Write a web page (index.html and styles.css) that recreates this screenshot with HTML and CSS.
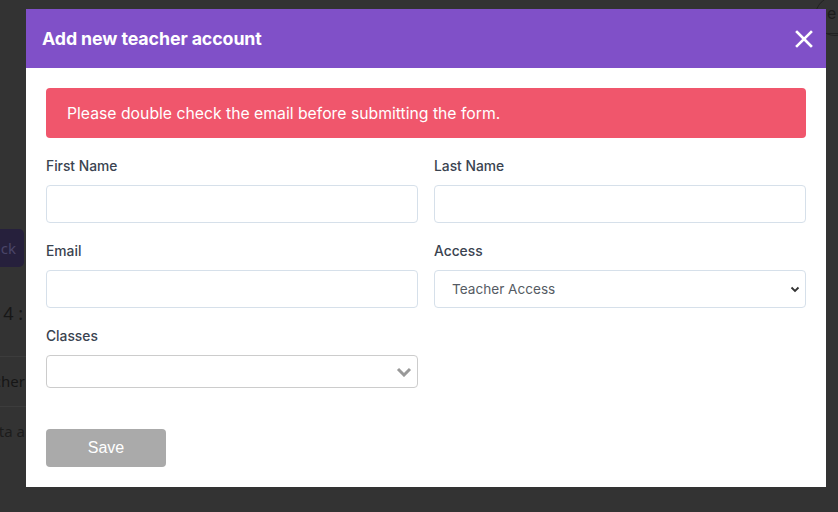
FILE: index.html
```html
<!DOCTYPE html>
<html lang="en">
<head>
<meta charset="utf-8">
<title>Add new teacher account</title>
<link rel="stylesheet" href="styles.css">
</head>
<body>
<div class="page">
  <div class="page-top"><span class="avatar">e</span></div>
  <div class="page-content">
    <button class="back-btn">Back</button>
    <div class="page-heading">Term 4 :</div>
    <div class="page-row">Teacher</div>
    <div class="page-row">No data a</div>
  </div>
</div>

<div class="overlay">
  <div class="modal">
    <div class="modal-header">
      <h2 class="modal-title">Add new teacher account</h2>
      <button class="close-btn" aria-label="Close">
        <svg width="18" height="18" viewBox="0 0 18 18"><path d="M2 2 L16 16 M16 2 L2 16" stroke="#fff" stroke-width="2.6" stroke-linecap="square"/></svg>
      </button>
    </div>
    <div class="modal-body">
      <div class="alert">Please double check the email before submitting the form.</div>
      <div class="form-grid">
        <div class="field">
          <label class="label">First Name</label>
          <div class="input"></div>
        </div>
        <div class="field">
          <label class="label">Last Name</label>
          <div class="input"></div>
        </div>
        <div class="field">
          <label class="label">Email</label>
          <div class="input"></div>
        </div>
        <div class="field">
          <label class="label">Access</label>
          <div class="input select">
            <span class="select-text">Teacher Access</span>
            <svg class="chev-small" width="10" height="7" viewBox="0 0 10 7"><path d="M1.5 1.5 L5 5 L8.5 1.5" fill="none" stroke="#333" stroke-width="1.8"/></svg>
          </div>
        </div>
        <div class="field">
          <label class="label">Classes</label>
          <div class="input multi">
            <svg class="chev-big" width="16" height="10" viewBox="0 0 16 10"><path d="M2 2 L8 8 L14 2" fill="none" stroke="#999" stroke-width="3"/></svg>
          </div>
        </div>
      </div>
      <button class="save-btn">Save</button>
    </div>
  </div>
</div>
</body>
</html>
```

FILE: styles.css
```css
* { box-sizing: border-box; }
html, body { margin: 0; padding: 0; }
body {
  width: 838px;
  height: 512px;
  overflow: hidden;
  background: #333333;
  font-family: "Inter", "Noto Sans", sans-serif;
  position: relative;
}

/* dimmed page behind the overlay */
.page { width: 100%; height: 100%; }
.page-top {
  height: 38px;
  border-bottom: 1px solid #222;
  margin-left: 826px;
}
.avatar {
  display: block;
  width: 40px;
  height: 40px;
  margin-top: -4px;
  margin-left: -11px;
  border: 1px solid #222;
  border-radius: 50%;
  color: #1c1c1c;
  font-size: 16px;
  padding: 6px 0 0 11px;
}
.page-content {
  margin-left: -58px;
  padding-top: 195px;
  width: 86px;
  font-family: "Noto Sans", sans-serif;
  white-space: nowrap;
}
.back-btn {
  display: block;
  width: 82px;
  height: 38px;
  background: #26203c;
  border: none;
  border-radius: 5px;
  color: #4a4568;
  font-size: 15px;
  font-family: "Noto Sans", sans-serif;
  text-align: right;
  padding-right: 8px;
}
.page-heading {
  margin-top: 32px;
  height: 58px;
  font-size: 18px;
  color: #171717;
  text-align: right;
  padding-right: 5px;
  border-bottom: 1px solid #3c3c3c;
  line-height: 28px;
}
.page-row {
  height: 50px;
  font-size: 15px;
  color: #161616;
  line-height: 48px;
  text-align: right;
  padding-right: 3px;
  border-bottom: 1px solid #3c3c3c;
}
.page-row:last-child { border-bottom: none; color: #1c1c1c; }

/* overlay + modal */
.overlay {
  position: absolute;
  inset: 0;
  padding: 9px 0 0 26px;
}
.modal {
  width: 800px;
  background: #fff;
}
.modal-header {
  height: 59px;
  background: #8050c8;
  display: flex;
  align-items: center;
  justify-content: space-between;
  padding: 0 13px 0 16px;
}
.modal-title {
  margin: 0;
  color: #fff;
  font-size: 17.8px;
  font-weight: 700;
  letter-spacing: -0.1px;
}
.close-btn {
  background: none;
  border: none;
  padding: 0;
  width: 18px;
  height: 18px;
  display: flex;
}
.modal-body {
  padding: 20px;
}
.alert {
  height: 50px;
  background: #f0566c;
  border-radius: 4px;
  color: #fff;
  font-size: 15.75px;
  display: flex;
  align-items: center;
  padding: 0 21px;
}
.form-grid {
  margin-top: 18px;
  display: grid;
  grid-template-columns: 1fr 1fr;
  column-gap: 16px;
  row-gap: 18px;
}
.label {
  display: block;
  line-height: 20px;
  font-size: 13.8px;
  font-weight: 500;
  color: #3a4350;
  margin-bottom: 9px;
}
.input {
  height: 38px;
  border: 1px solid #d6e0ea;
  border-radius: 4px;
  background: #fff;
}
.select {
  display: flex;
  align-items: center;
  justify-content: space-between;
  padding: 0 5px 0 17px;
}
.select-text {
  font-size: 13.6px;
  color: #555b63;
}
.multi {
  height: 33px;
  border-color: #cccccc;
  display: flex;
  align-items: center;
  justify-content: flex-end;
  padding-right: 5px;
}
.save-btn {
  margin-top: 41px;
  width: 120px;
  height: 38px;
  background: #aaaaaa;
  border: none;
  border-radius: 4px;
  color: #fff;
  font-family: "Liberation Sans", Arial, sans-serif;
  font-size: 16px;
  display: block;
}
```
